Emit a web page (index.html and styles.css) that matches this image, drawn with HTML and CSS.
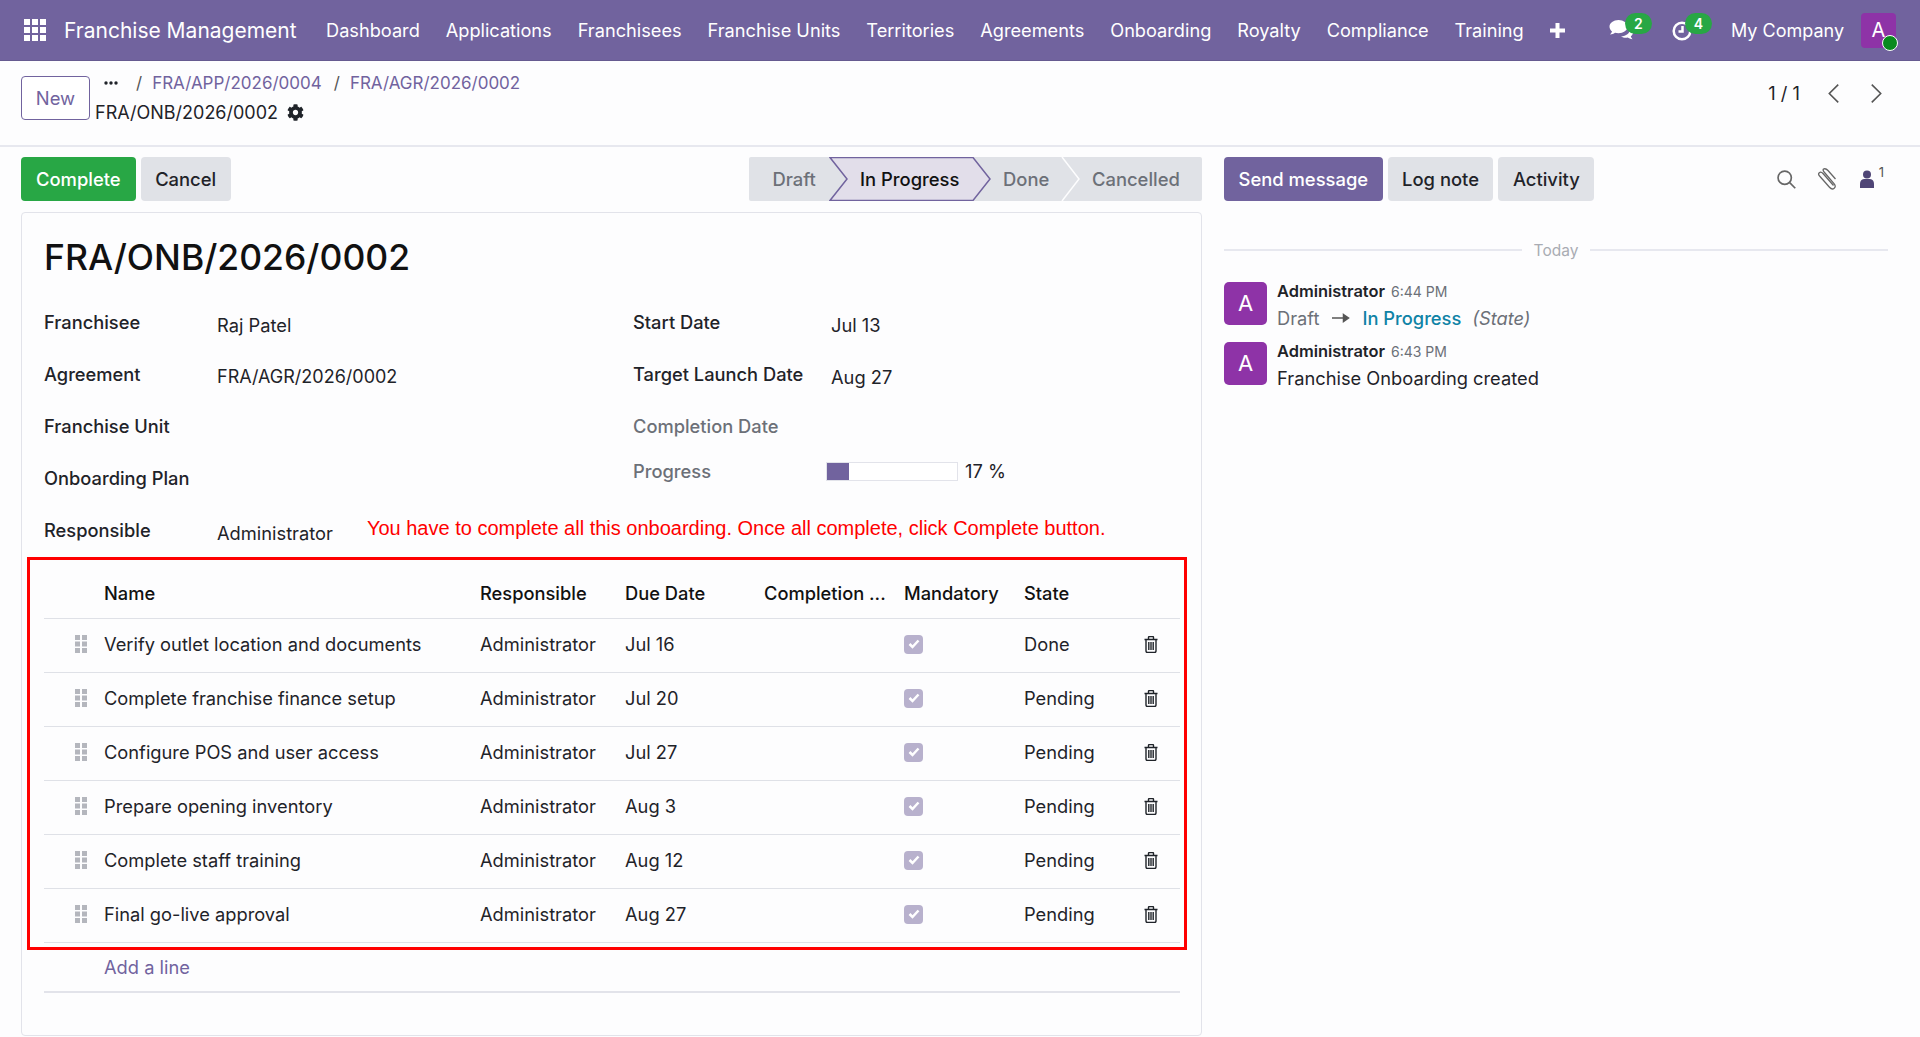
FILE: index.html
```html
<!DOCTYPE html>
<html>
  <head>
    <title>Franchise Onboarding</title>
    <link rel="stylesheet" href="styles.css">
  </head>
  <body>
    <nav class="navbar">
      <svg class="appsIcon" viewBox="0 0 22 22"><path d="M0 0h6v6H0zM8 0h6v6H8zM16 0h6v6h-6zM0 8h6v6H0zM8 8h6v6H8zM16 8h6v6h-6zM0 16h6v6H0zM8 16h6v6H8zM16 16h6v6h-6z"/></svg>
      <span class="brand">Franchise Management</span>
      <a class="navItem">Dashboard</a>
      <a class="navItem">Applications</a>
      <a class="navItem">Franchisees</a>
      <a class="navItem">Franchise Units</a>
      <a class="navItem">Territories</a>
      <a class="navItem">Agreements</a>
      <a class="navItem">Onboarding</a>
      <a class="navItem">Royalty</a>
      <a class="navItem">Compliance</a>
      <a class="navItem">Training</a>
      <svg class="plusIcon" viewBox="0 0 15 15"><path d="M5.5 0h4v5.5H15v4H9.500V15h-4V9.500H0v-4h5.500z"/></svg>
      <div class="navRight">
        <div class="systray chatTray">
          <svg class="chatIcon" viewBox="0 0 24 22"><path d="M9.500 1C4.500 1 .5 4 .5 7.700c0 1.800 1 3.500 2.500 4.700-.3 1.100-1 2.100-2 3 2 0 3.800-.7 5-1.700 1.100.3 2.300.5 3.500.5 5 0 9-3 9-6.500S14.500 1 9.500 1z"/><path d="M21 10.500c0 3.700-3.900 6.600-9 7 1.500 1 3 1.300 5 1.300.6 0 1.200-.1 1.700-.2 1.100.9 2.800 1.500 4.800 1.600-.9-.9-1.500-1.900-1.700-2.900 1.400-1 2.200-2.400 2.200-4 0-1.300-1-2.500-3-2.800z"/></svg>
          <span class="badge chatBadge">2</span>
        </div>
        <div class="systray clockTray">
          <svg class="clockIcon" viewBox="0 0 20 20"><circle cx="10" cy="10" r="8.300"/><path d="M10.500 5v5.500H6.500"/></svg>
          <span class="badge clockBadge">4</span>
        </div>
        <span class="company">My Company</span>
        <div class="userAvatar">A<span class="onlineDot"></span></div>
      </div>
    </nav>

    <header class="controlPanel">
      <button class="newBtn">New</button>
      <div class="crumbs">
        <div class="crumbLine">
          <svg class="dotsIcon" viewBox="0 0 14 4"><circle cx="2" cy="2" r="1.700"/><circle cx="7" cy="2" r="1.700"/><circle cx="12" cy="2" r="1.700"/></svg>
          <span class="slash slashFirst">/</span>
          <a class="crumbLink">FRA/APP/2026/0004</a>
          <span class="slash">/</span>
          <a class="crumbLink">FRA/AGR/2026/0002</a>
        </div>
        <div class="crumbCurrent">
          FRA/ONB/2026/0002
          <svg class="gearIcon" viewBox="0 0 512 512"><path d="M487.400 315.700l-42.600-24.600c4.300-23.200 4.300-47 0-70.200l42.600-24.600c4.900-2.800 7.100-8.600 5.500-14-11.100-35.600-30-67.800-54.700-94.600-3.800-4.100-10-5.100-14.800-2.300L380.800 110c-17.900-15.400-38.500-27.300-60.800-35.100V25.800c0-5.600-3.900-10.500-9.400-11.700-36.700-8.200-74.300-7.800-109.200 0-5.500 1.200-9.400 6.100-9.400 11.700V75c-22.200 7.900-42.800 19.800-60.800 35.100L88.700 85.500c-4.900-2.800-11-1.900-14.800 2.300-24.700 26.700-43.600 58.900-54.700 94.600-1.700 5.400.6 11.200 5.500 14L67.300 221c-4.300 23.200-4.300 47 0 70.200l-42.600 24.600c-4.900 2.800-7.100 8.600-5.500 14 11.100 35.600 30 67.800 54.700 94.600 3.800 4.100 10 5.100 14.800 2.300l42.600-24.600c17.900 15.400 38.500 27.300 60.800 35.100v49.200c0 5.600 3.900 10.500 9.400 11.700 36.700 8.200 74.300 7.800 109.200 0 5.500-1.200 9.400-6.100 9.400-11.700v-49.200c22.200-7.900 42.800-19.800 60.800-35.100l42.600 24.600c4.900 2.800 11 1.900 14.800-2.300 24.700-26.700 43.600-58.900 54.700-94.600 1.500-5.500-.7-11.300-5.600-14.100zM256 336c-44.100 0-80-35.900-80-80s35.900-80 80-80 80 35.900 80 80-35.900 80-80 80z"/></svg>
        </div>
      </div>
      <div class="pager">
        <span class="pagerText">1 / 1</span>
        <svg class="pagerArrow" viewBox="0 0 12 20"><path d="M10.500 1.500L2 10l8.500 8.500"/></svg>
        <svg class="pagerArrow" viewBox="0 0 12 20"><path d="M1.500 1.500L10 10l-8.500 8.500"/></svg>
      </div>
    </header>

    <main class="content">
      <section class="formCol">
        <div class="actionBar">
          <button class="btn btnGreen">Complete</button>
          <button class="btn btnGrey">Cancel</button>
          <div class="statusBar">
            <span class="step stepDraft">Draft</span>
            <span class="step stepActive">
              <svg class="stepShape" viewBox="0 0 162 44" preserveAspectRatio="none"><path d="M1 .5H144L161 22L144 43.500H1L18 22z"/></svg>
              <span class="stepLabel">In Progress</span>
            </span>
            <span class="step stepDone">Done</span>
            <span class="step stepCancelled">
              <svg class="stepSep" viewBox="0 0 20 44" preserveAspectRatio="none"><path d="M1 0L18 22L1 44"/></svg>
              Cancelled
            </span>
          </div>
        </div>

        <div class="sheet">
          <h1 class="title">FRA/ONB/2026/0002</h1>
          <div class="fields">
            <div class="field"><label class="fieldLabel">Franchisee</label><span class="fieldValue">Raj Patel</span></div>
            <div class="field fieldRight"><label class="fieldLabel">Start Date</label><span class="fieldValue">Jul 13</span></div>
            <div class="field"><label class="fieldLabel">Agreement</label><span class="fieldValue codeValue">FRA/AGR/2026/0002</span></div>
            <div class="field fieldRight"><label class="fieldLabel">Target Launch Date</label><span class="fieldValue">Aug 27</span></div>
            <div class="field"><label class="fieldLabel">Franchise Unit</label></div>
            <div class="field fieldRight"><label class="fieldLabel muted">Completion Date</label></div>
            <div class="field"><label class="fieldLabel">Onboarding Plan</label></div>
            <div class="field fieldRight fieldProgress">
              <label class="fieldLabel muted">Progress</label>
              <div class="progressTrack"><div class="progressFill" style="width: 17%"></div></div>
              <span class="progressText">17 %</span>
            </div>
            <div class="field fieldWide">
              <label class="fieldLabel">Responsible</label><span class="fieldValue">Administrator</span>
              <span class="warning">You have to complete all this onboarding. Once all complete, click Complete button.</span>
            </div>
          </div>

          <div class="redBox">
            <div class="lineRow headRow">
              <span></span><span>Name</span><span>Responsible</span><span>Due Date</span><span>Completion ...</span><span>Mandatory</span><span>State</span><span></span>
            </div>
            <div class="lineRow">
              <svg class="dragIcon" viewBox="0 0 12 18"><path d="M0 0h5v5H0zM7 0h5v5H7zM0 6.500h5v5H0zM7 6.500h5v5H7zM0 13h5v5H0zM7 13h5v5H7z"/></svg>
              <span>Verify outlet location and documents</span><span>Administrator</span><span>Jul 16</span><span></span>
              <span class="checkBox"><svg viewBox="0 0 12 10"><path d="M1.500 5l3 3 6-6.500"/></svg></span>
              <span>Done</span>
              <svg class="trashIcon" viewBox="0 0 14 17"><path d="M.5 3.500h13M4.500 3.500V1.500q0-1 1-1h3q1 0 1 1v2M2 3.500v11.500q0 1.500 1.500 1.500h7q1.500 0 1.500-1.500V3.500M4.800 6v8M7 6v8M9.200 6v8"/></svg>
            </div>
            <div class="lineRow">
              <svg class="dragIcon" viewBox="0 0 12 18"><path d="M0 0h5v5H0zM7 0h5v5H7zM0 6.500h5v5H0zM7 6.500h5v5H7zM0 13h5v5H0zM7 13h5v5H7z"/></svg>
              <span>Complete franchise finance setup</span><span>Administrator</span><span>Jul 20</span><span></span>
              <span class="checkBox"><svg viewBox="0 0 12 10"><path d="M1.500 5l3 3 6-6.500"/></svg></span>
              <span>Pending</span>
              <svg class="trashIcon" viewBox="0 0 14 17"><path d="M.5 3.500h13M4.500 3.500V1.500q0-1 1-1h3q1 0 1 1v2M2 3.500v11.500q0 1.500 1.500 1.500h7q1.500 0 1.500-1.500V3.500M4.800 6v8M7 6v8M9.200 6v8"/></svg>
            </div>
            <div class="lineRow">
              <svg class="dragIcon" viewBox="0 0 12 18"><path d="M0 0h5v5H0zM7 0h5v5H7zM0 6.500h5v5H0zM7 6.500h5v5H7zM0 13h5v5H0zM7 13h5v5H7z"/></svg>
              <span>Configure POS and user access</span><span>Administrator</span><span>Jul 27</span><span></span>
              <span class="checkBox"><svg viewBox="0 0 12 10"><path d="M1.500 5l3 3 6-6.500"/></svg></span>
              <span>Pending</span>
              <svg class="trashIcon" viewBox="0 0 14 17"><path d="M.5 3.500h13M4.500 3.500V1.500q0-1 1-1h3q1 0 1 1v2M2 3.500v11.500q0 1.500 1.500 1.500h7q1.500 0 1.500-1.500V3.500M4.800 6v8M7 6v8M9.200 6v8"/></svg>
            </div>
            <div class="lineRow">
              <svg class="dragIcon" viewBox="0 0 12 18"><path d="M0 0h5v5H0zM7 0h5v5H7zM0 6.500h5v5H0zM7 6.500h5v5H7zM0 13h5v5H0zM7 13h5v5H7z"/></svg>
              <span>Prepare opening inventory</span><span>Administrator</span><span>Aug 3</span><span></span>
              <span class="checkBox"><svg viewBox="0 0 12 10"><path d="M1.500 5l3 3 6-6.500"/></svg></span>
              <span>Pending</span>
              <svg class="trashIcon" viewBox="0 0 14 17"><path d="M.5 3.500h13M4.500 3.500V1.500q0-1 1-1h3q1 0 1 1v2M2 3.500v11.500q0 1.500 1.500 1.500h7q1.500 0 1.500-1.500V3.500M4.800 6v8M7 6v8M9.200 6v8"/></svg>
            </div>
            <div class="lineRow">
              <svg class="dragIcon" viewBox="0 0 12 18"><path d="M0 0h5v5H0zM7 0h5v5H7zM0 6.500h5v5H0zM7 6.500h5v5H7zM0 13h5v5H0zM7 13h5v5H7z"/></svg>
              <span>Complete staff training</span><span>Administrator</span><span>Aug 12</span><span></span>
              <span class="checkBox"><svg viewBox="0 0 12 10"><path d="M1.500 5l3 3 6-6.500"/></svg></span>
              <span>Pending</span>
              <svg class="trashIcon" viewBox="0 0 14 17"><path d="M.5 3.500h13M4.500 3.500V1.500q0-1 1-1h3q1 0 1 1v2M2 3.500v11.500q0 1.500 1.500 1.500h7q1.500 0 1.500-1.500V3.500M4.800 6v8M7 6v8M9.200 6v8"/></svg>
            </div>
            <div class="lineRow">
              <svg class="dragIcon" viewBox="0 0 12 18"><path d="M0 0h5v5H0zM7 0h5v5H7zM0 6.500h5v5H0zM7 6.500h5v5H7zM0 13h5v5H0zM7 13h5v5H7z"/></svg>
              <span>Final go-live approval</span><span>Administrator</span><span>Aug 27</span><span></span>
              <span class="checkBox"><svg viewBox="0 0 12 10"><path d="M1.500 5l3 3 6-6.500"/></svg></span>
              <span>Pending</span>
              <svg class="trashIcon" viewBox="0 0 14 17"><path d="M.5 3.500h13M4.500 3.500V1.500q0-1 1-1h3q1 0 1 1v2M2 3.500v11.500q0 1.500 1.500 1.500h7q1.500 0 1.500-1.500V3.500M4.800 6v8M7 6v8M9.200 6v8"/></svg>
            </div>
          </div>
          <div class="addLine"><a class="addLink">Add a line</a></div>
        </div>
      </section>

      <aside class="chatter">
        <div class="chatterBar">
          <button class="btn btnPurple">Send message</button>
          <button class="btn btnGrey">Log note</button>
          <button class="btn btnGrey">Activity</button>
          <div class="chatterTools">
            <svg class="searchIcon" viewBox="0 0 18 18"><circle cx="7.300" cy="7.300" r="6.300"/><path d="M12 12l5.300 5.300"/></svg>
            <svg class="clipIcon" viewBox="0 0 20 22"><path d="M16.500 17.500L6 5.500q-2-2.200-3.700-.8T3 8.500l9.500 10.800q2.500 2.800 4.700 1t-.2-4.700L7.500 4.500Q5 1.500 7 .9t4 1.600l7.500 8.500"/></svg>
            <svg class="userIcon" viewBox="0 0 14 18"><circle cx="7" cy="4.500" r="4"/><path d="M0 18v-4q0-4.500 4-5h6q4 .5 4 5v4z"/></svg>
            <sup class="followers">1</sup>
          </div>
        </div>

        <div class="dateLine"><span class="dateRule"></span><span class="dateText">Today</span><span class="dateRule"></span></div>

        <div class="msg">
          <div class="msgAvatar">A</div>
          <div class="msgBody">
            <div class="msgHead"><b class="msgAuthor">Administrator</b><span class="msgTime">6:44 PM</span></div>
            <div class="msgText trackLine">
              <span class="muted">Draft</span>
              <svg class="arrowIcon" viewBox="0 0 18 10"><path d="M0 5h14M11.500 1.500L16.500 5l-5 3.500z"/></svg>
              <span class="trackNew">In Progress</span>
              <i class="muted">(State)</i>
            </div>
          </div>
        </div>
        <div class="msg">
          <div class="msgAvatar">A</div>
          <div class="msgBody">
            <div class="msgHead"><b class="msgAuthor">Administrator</b><span class="msgTime">6:43 PM</span></div>
            <div class="msgText">Franchise Onboarding created</div>
          </div>
        </div>
      </aside>
    </main>
  </body>
</html>
```

FILE: styles.css
```css
* { box-sizing: border-box; }
html, body { height: 100%; }
body { display: flex; flex-direction: column; height: 1037px; margin: 0; overflow: hidden; background: #fdfdfe; color: #1f2329; font-family: Inter, "Noto Sans", sans-serif; font-size: 18.300px; }
button { font-family: inherit; font-size: 18.400px; }
a { text-decoration: none; }

.navbar { display: flex; align-items: center; height: 61px; flex: none; padding-left: 24px; background: #71639e; color: #fff; border-bottom: 1px solid #655a90; font-size: 18.200px; }
.appsIcon { width: 22px; height: 22px; fill: #fff; margin-right: 18px; }
.brand { font-size: 21px; width: 262px; white-space: nowrap; }
.navItem { margin-right: 25.900px; white-space: nowrap; color: #fff; }
.plusIcon { width: 15px; height: 15px; fill: #fff; margin-left: 0; }
.navRight { display: flex; align-items: center; margin-left: auto; height: 100%; }
.systray { position: relative; height: 100%; display: flex; align-items: center; }
.chatTray { width: 43px; margin-right: 20px; }
.clockTray { width: 40px; margin-right: 19px; }
.chatIcon { width: 24px; height: 22px; fill: #fff; }
.clockIcon { width: 20px; height: 20px; fill: none; stroke: #fff; stroke-width: 2.500; margin-top: 2px; }
.badge { position: absolute; top: 13px; display: block; width: 27px; height: 21px; border-radius: 11px; background: #28a745; color: #fff; font-size: 14px; font-weight: 600; line-height: 21px; text-align: center; }
.chatBadge { left: 16px; }
.clockBadge { left: 13px; }
.company { font-size: 18px; white-space: nowrap; margin-right: 17px; }
.userAvatar { position: relative; width: 35px; height: 35px; margin-right: 24px; border-radius: 4px; background: #8e33a7; color: #fff; font-size: 20px; line-height: 35px; text-align: center; }
.onlineDot { position: absolute; right: -2px; bottom: -3px; width: 16px; height: 16px; border-radius: 50%; background: #0a8a1e; border: 1.500px solid #fff; }

.controlPanel { display: flex; flex: none; height: 86px; padding: 15px 32px 0 21px; border-bottom: 2px solid #e7e8ef; }
.newBtn { width: 69px; height: 44px; padding: 0; background: #fff; border: 1px solid #71639e; border-radius: 4px; color: #71639e; }
.crumbs { margin-left: 5px; }
.crumbLine { display: flex; align-items: center; height: 14px; margin-left: 9px; margin-top: 0; }
.dotsIcon { width: 14px; height: 4px; fill: #1f2329; }
.slash { margin: 0 10px 0 6px; color: #555; font-size: 17px; }
.slashFirst { margin-left: 18px; }
.crumbLink { color: #71639e; font-size: 17px; white-space: nowrap; margin-right: 6px; }
.crumbCurrent { display: flex; align-items: center; height: 22px; margin-top: 11px; font-size: 18px; white-space: nowrap; }
.gearIcon { width: 17px; height: 17px; margin-left: 9px; fill: #1f2329; }
.pager { display: flex; align-items: center; height: 34px; margin-left: auto; }
.pagerText { margin-right: 27px; }
.pagerArrow { width: 13px; height: 21px; fill: none; stroke: #555; stroke-width: 1.500; margin-right: 30px; }
.pagerArrow:last-child { margin-right: 5px; }

.content { display: flex; flex: 1; min-height: 0; }
.formCol { display: flex; flex-direction: column; width: 1202px; padding: 10px 0 1px 21px; }
.actionBar { display: flex; flex: none; height: 44px; gap: 5px; margin-bottom: 11px; }
.btn { height: 44px; padding: 0 14.500px; border: none; border-radius: 4px; font-weight: 500; white-space: nowrap; }
.btnGreen { background: #28a745; color: #fff; padding: 0 15px; }
.btnGrey { background: #e0e2e7; color: #1f2329; }
.btnPurple { background: #71639e; color: #fff; }

.statusBar { display: flex; width: 453px; height: 44px; margin-left: auto; background: #e0e2e7; border-radius: 2px; color: #6c7078; font-weight: 500; font-size: 18.400px; }
.step { position: relative; display: flex; align-items: center; white-space: nowrap; }
.stepDraft { width: 80px; padding-left: 23.500px; }
.stepActive { width: 162px; padding-left: 31px; color: #111; }
.stepShape { position: absolute; left: 0; top: 0; width: 100%; height: 100%; fill: #e2deea; stroke: #71639e; stroke-width: 1.500; }
.stepLabel { position: relative; }
.stepDone { width: 70px; padding-left: 12px; }
.stepCancelled { flex: 1; padding-left: 31px; }
.stepSep { position: absolute; left: 0; top: 0; width: 20px; height: 100%; fill: none; stroke: #fdfdfe; stroke-width: 1.500; }

.sheet { flex: 1; width: 1181px; padding: 0 21px 0 22px; background: #fdfdfe; border: 1px solid #e2e3ea; border-radius: 4px; }
.title { margin: 0; height: 83px; padding-top: 21px; font-size: 35.500px; font-weight: 500; line-height: 47px; color: #111; }
.fields { display: grid; grid-template-columns: 589px 1fr; grid-auto-rows: 52px; }
.field { display: flex; align-items: center; }
.fieldWide { grid-column: 1 / 3; }
.fieldLabel { width: 173px; flex: none; font-weight: 500; color: #1f2329; }
.fieldRight .fieldLabel { width: 198px; }
.fieldValue { padding-top: 5px; white-space: nowrap; }
.codeValue { font-size: 18px; }
.muted { color: #6c7078; }
.fieldLabel.muted { font-weight: 500; color: #6c7078; }
.fieldProgress { padding-bottom: 14px; }
.fieldRight.fieldProgress .fieldLabel { width: 193px; }
.progressTrack { width: 132px; height: 19px; border: 1px solid #e2e3ea; background: #fff; }
.progressFill { height: 100%; background: #71639e; }
.progressText { margin-left: 7px; }
.warning { margin-left: 34px; margin-top: -4px; color: #f00; font-family: "Liberation Sans", sans-serif; font-size: 20px; white-space: nowrap; }

.redBox { width: 1160px; margin: 1px 0 0 -17px; padding: 0 4px 4px 14px; border: 3px solid #f00; }
.lineRow { display: grid; grid-template-columns: 60px 376px 145px 139px 140px 120px 120px 1fr; align-items: center; height: 54px; padding-bottom: 3px; border-bottom: 1px solid #dfe1e7; white-space: nowrap; }
.headRow { height: 59px; padding: 7px 0 0; font-weight: 500; color: #111; }
.dragIcon { width: 12px; height: 18px; margin-left: 31px; fill: #b4b6bd; }
.checkBox { display: flex; align-items: center; justify-content: center; width: 19px; height: 19px; border-radius: 4px; background: #b8b1cd; }
.checkBox svg { width: 12px; height: 10px; fill: none; stroke: #fff; stroke-width: 2.500; }
.trashIcon { width: 14px; height: 17px; fill: none; stroke: #1f2329; stroke-width: 1.400; }
.addLine { height: 43px; padding-left: 60px; line-height: 34px; border-bottom: 2px solid #e2e3ea; }
.addLink { color: #71639e; }

.chatter { flex: 1; padding: 10px 32px 0 22px; }
.chatterBar { display: flex; align-items: center; height: 44px; gap: 5px; }
.chatterTools { display: flex; align-items: center; margin-left: auto; color: #555; }
.searchIcon { width: 19px; height: 19px; fill: none; stroke: #666; stroke-width: 1.600; margin-right: 21px; }
.clipIcon { width: 20px; height: 22px; fill: none; stroke: #666; stroke-width: 1.300; margin-right: 23px; }
.userIcon { width: 14px; height: 18px; fill: #4f4576; }
.followers { font-size: 13px; margin: -14px 4px 0 5px; color: #555; }
.dateLine { display: flex; align-items: center; gap: 12px; margin-top: 40px; height: 18px; }
.dateRule { flex: 1; height: 2px; background: #e7e8ef; }
.dateText { font-size: 15.500px; color: #a9acb3; }
.msg { display: flex; gap: 10px; height: 60px; }
.dateLine + .msg { margin-top: 23px; }
.msgAvatar { width: 43px; height: 43px; flex: none; border-radius: 5px; background: #8e33a7; color: #fff; font-size: 22px; line-height: 43px; text-align: center; }
.msgHead { display: flex; align-items: baseline; gap: 6px; height: 19px; line-height: 19px; }
.msgAuthor { font-size: 16.400px; font-weight: 600; color: #1f2329; }
.msgTime { font-size: 14px; color: #6c7078; }
.msgText { margin-top: 6px; line-height: 22px; white-space: nowrap; }
.trackLine { display: flex; align-items: center; }
.arrowIcon { width: 18px; height: 10px; margin: 0 12px 0 13px; fill: #555; stroke: #555; stroke-width: 1.500; }
.trackNew { color: #0f83a6; font-weight: 500; margin-right: 11px; }
```
